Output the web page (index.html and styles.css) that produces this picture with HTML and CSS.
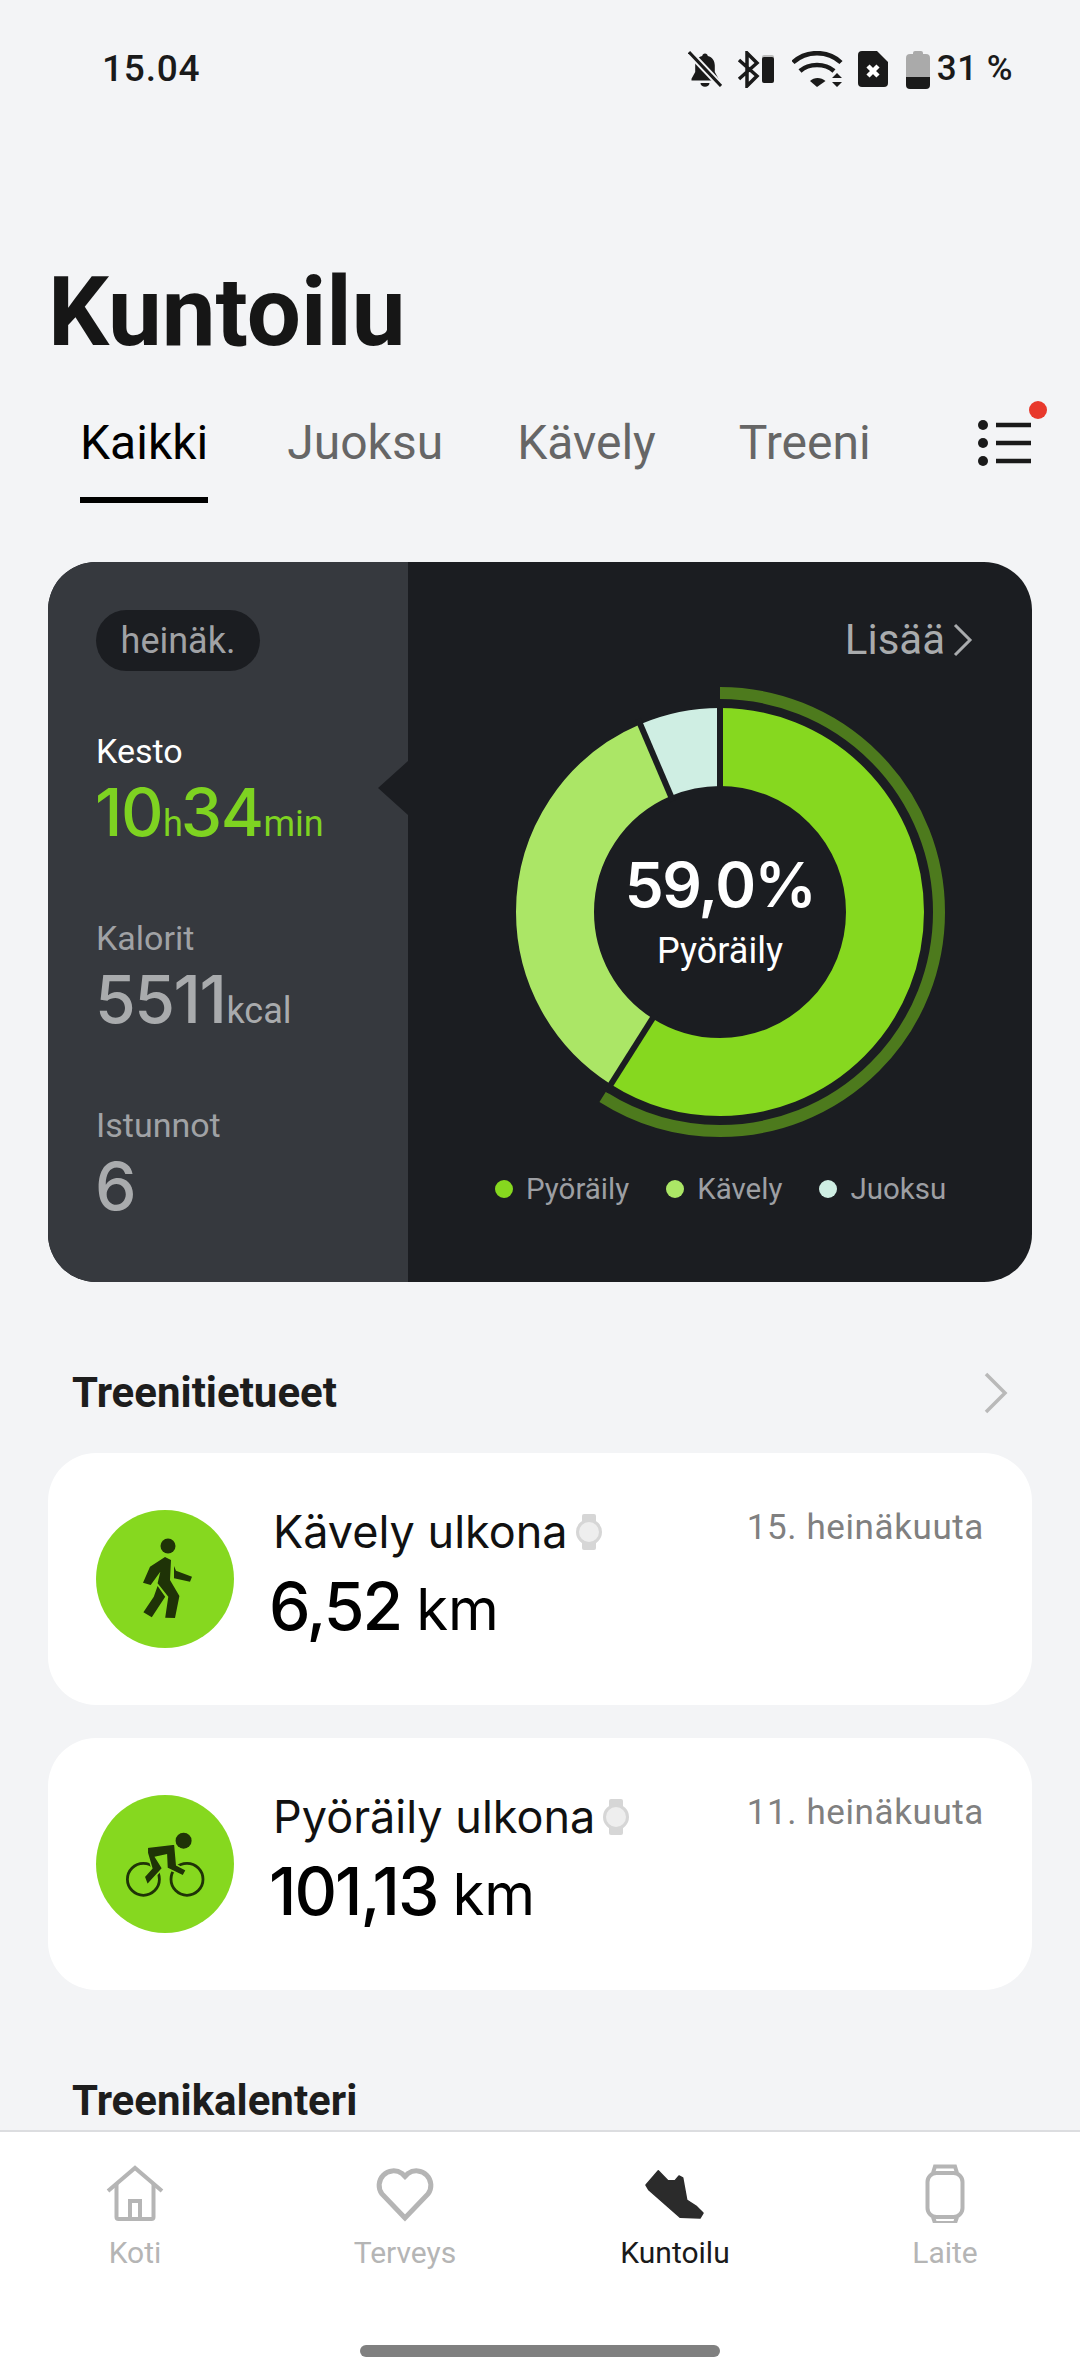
FILE: index.html
```html
<!DOCTYPE html>
<html lang="en">
<head>
  <meta charset="UTF-8">
  <title>Kuntoilu</title>
  <link rel="stylesheet" href="styles.css">
</head>
<body>
  <div class="status">
    <span class="clock">15.04</span>
    <div class="status-icons">
      <svg class="ic-bell" width="34" height="36" viewBox="0 0 34 36">
        <path d="M17 2.5c1.6 0 2.6 1 2.8 2.4 4.6 1.2 7 5 7 9.6v6.5l3.7 6.8v1.7H3.500v-1.700l3.700-6.800v-6.500c0-4.600 2.400-8.400 7-9.600.2-1.400 1.200-2.400 2.800-2.400z" fill="#1a1a1a"/>
        <path d="M12.500 32h9a4.500 3.800 0 0 1-9 0z" fill="#1a1a1a"/>
        <path d="M1 1l32 34" stroke="#f3f4f6" stroke-width="7"/>
        <path d="M1 1l32 34" stroke="#1a1a1a" stroke-width="3"/>
      </svg>
      <svg class="ic-bt" width="38" height="37" viewBox="0 0 38 37">
        <path d="M2 9l18 16-10 10V2l10 10L2 28" fill="none" stroke="#1a1a1a" stroke-width="3.500"/>
        <rect x="25" y="4" width="12" height="6" rx="2" fill="#bdbdbd"/>
        <rect x="25" y="6" width="12" height="26" rx="2" fill="#1a1a1a"/>
      </svg>
      <svg class="ic-wifi" width="52" height="36" viewBox="0 0 52 36">
        <path d="M2 11.500C15 -1 37 -1 50 11.500" transform="translate(-1 0)" fill="none" stroke="#1a1a1a" stroke-width="4.500"/>
        <path d="M9 20c9-8 25-8 34 0" transform="translate(-1 0)" fill="none" stroke="#1a1a1a" stroke-width="4.500"/>
        <path d="M18 30c4-4 11-4 15.500 0L25 36z" fill="#1a1a1a"/>
        <path d="M45 22l5 5H40zM40 31h10l-5 5z" fill="#1a1a1a"/>
      </svg>
      <svg class="ic-sim" width="30" height="36" viewBox="0 0 30 36">
        <path d="M4 0h15l11 11v21a4 4 0 0 1-4 4H4a4 4 0 0 1-4-4V4a4 4 0 0 1 4-4z" fill="#1a1a1a"/>
        <path d="M10 15l10 10M20 15L10 25" stroke="#fff" stroke-width="4.500"/>
      </svg>
      <svg class="ic-batt" width="24" height="39" viewBox="0 0 24 39">
        <path d="M7 3a2 2 0 0 1 2-2h6a2 2 0 0 1 2 2v1h3a4 4 0 0 1 4 4v19H0V8a4 4 0 0 1 4-4h3z" fill="#aaaaaa"/>
        <path d="M0 27h24v8a4 4 0 0 1-4 4H4a4 4 0 0 1-4-4z" fill="#1a1a1a"/>
      </svg>
      <span class="batt-text">31 %</span>
    </div>
  </div>

  <main class="content">
    <h1 class="title">Kuntoilu</h1>

    <div class="tabs">
      <span class="tab active">Kaikki</span>
      <span class="tab">Juoksu</span>
      <span class="tab">Kävely</span>
      <span class="tab">Treeni</span>
      <div class="tab-menu">
        <svg width="70" height="66" viewBox="0 0 70 66">
          <circle cx="6" cy="24" r="5" fill="#1a1a1a"/>
          <circle cx="6" cy="42" r="5" fill="#1a1a1a"/>
          <circle cx="6" cy="60" r="5" fill="#1a1a1a"/>
          <path d="M19 24h35M19 42h35M19 60h35" stroke="#1a1a1a" stroke-width="4.500"/>
          <circle cx="61" cy="9" r="9" fill="#e8392c"/>
        </svg>
      </div>
    </div>

    <section class="summary">
      <div class="summary-left">
        <span class="month">heinäk.</span>
        <div class="stat first">
          <div class="stat-label on">Kesto</div>
          <div class="stat-value on-green">10<small>h</small>34<small>min</small></div>
        </div>
        <div class="stat">
          <div class="stat-label">Kalorit</div>
          <div class="stat-value">5511<small>kcal</small></div>
        </div>
        <div class="stat">
          <div class="stat-label">Istunnot</div>
          <div class="stat-value">6</div>
        </div>
        <span class="notch"></span>
      </div>
      <div class="summary-right">
        <div class="more">
          <span>Lisää</span>
          <svg width="22" height="36" viewBox="0 0 22 36"><path d="M3 3l15 15L3 33" fill="none" stroke="#a9abad" stroke-width="3"/></svg>
        </div>
        <div class="donut">
          <svg width="450" height="450" viewBox="-225 -225 450 450">
            <g transform="rotate(-90)" fill="none">
              <circle r="219" stroke="#4d7a1d" stroke-width="12" pathLength="100" stroke-dasharray="59 41"/>
              <circle r="165" stroke="#86d81f" stroke-width="78" pathLength="100" stroke-dasharray="59 41"/>
              <circle r="165" stroke="#abe666" stroke-width="78" pathLength="100" stroke-dasharray="34.600 65.400" stroke-dashoffset="-59"/>
              <circle r="165" stroke="#cfeee3" stroke-width="78" pathLength="100" stroke-dasharray="6.400 93.600" stroke-dashoffset="-93.600"/>
            </g>
            <g stroke="#1b1d21" stroke-width="6">
              <path d="M0 -120V-210"/>
              <path d="M-64 101L-114 180"/>
              <path d="M-47 -111L-82 -193"/>
            </g>
          </svg>
          <div class="donut-center">
            <div class="donut-pct">59,0%</div>
            <div class="donut-name">Pyöräily</div>
          </div>
        </div>
        <div class="legend">
          <span class="legend-item"><i class="dot green"></i>Pyöräily</span>
          <span class="legend-item"><i class="dot light"></i>Kävely</span>
          <span class="legend-item"><i class="dot pale"></i>Juoksu</span>
        </div>
      </div>
    </section>

    <div class="section-head">
      <h2>Treenitietueet</h2>
      <svg width="28" height="44" viewBox="0 0 28 44"><path d="M4 3l19 19L4 41" fill="none" stroke="#b9b9b9" stroke-width="3.500"/></svg>
    </div>

    <article class="record">
      <div class="record-icon">
        <svg width="138" height="138" viewBox="0 0 138 138" fill="#1f3307">
          <circle cx="72" cy="36" r="7.500"/>
          <path d="M69 47l6 3-1 20 9.400 16L79 108l-9.800-.300 3.100-21-10.700-13.400 2.700-11.600L54.700 75 47 72.700 54 56.700z"/>
          <path d="M61.600 76l7.600 10.700-13.400 20.600-8.400-5 10.400-15.600z"/>
          <path d="M78 56l2 4.700 16 6-2 5-16-3.400z"/>
        </svg>
      </div>
      <div class="record-body">
        <div class="record-name">Kävely ulkona<svg class="watch" width="26" height="36" viewBox="0 0 26 36"><rect x="6" y="0" width="14" height="36" rx="2" fill="#d6d6d6"/><circle cx="13" cy="18" r="11.500" fill="#eeeeee" stroke="#d6d6d6" stroke-width="3"/></svg></div>
        <div class="record-value">6,52<small>km</small></div>
      </div>
      <span class="record-date">15. heinäkuuta</span>
    </article>

    <article class="record">
      <div class="record-icon">
        <svg width="138" height="138" viewBox="0 0 138 138">
          <circle cx="47.400" cy="84.300" r="16" fill="none" stroke="#1f3307" stroke-width="2.800"/>
          <circle cx="91" cy="84.300" r="16" fill="none" stroke="#1f3307" stroke-width="2.800"/>
          <g fill="#1f3307">
            <circle cx="87.600" cy="45.700" r="8"/>
            <path d="M51.300 52.300L78.800 49l1.900 21 9.600 5-3.300 6-16-7.700-.6-13.300-10.700 2.300 6.900 11L51.300 90l-3.100-8.300 7.600-8.400L51.300 58z" stroke="#86d81f" stroke-width="1.500"/>
          </g>
        </svg>
      </div>
      <div class="record-body">
        <div class="record-name">Pyöräily ulkona<svg class="watch" width="26" height="36" viewBox="0 0 26 36"><rect x="6" y="0" width="14" height="36" rx="2" fill="#d6d6d6"/><circle cx="13" cy="18" r="11.500" fill="#eeeeee" stroke="#d6d6d6" stroke-width="3"/></svg></div>
        <div class="record-value">101,13<small>km</small></div>
      </div>
      <span class="record-date">11. heinäkuuta</span>
    </article>

    <div class="section-head cal">
      <h2>Treenikalenteri</h2>
    </div>
  </main>

  <nav class="bottom-nav">
    <div class="nav-item">
      <svg width="60" height="60" viewBox="0 0 60 60" fill="none" stroke="#b5b5b5" stroke-width="4">
        <path d="M3 28L30 5l27 23"/>
        <path d="M11.500 21v33a2 2 0 0 0 2 2h33a2 2 0 0 0 2-2V21"/>
        <path d="M25 55V38h10v17"/>
      </svg>
      <span>Koti</span>
    </div>
    <div class="nav-item">
      <svg width="60" height="60" viewBox="0 0 60 60" fill="none" stroke="#b5b5b5" stroke-width="5">
        <path d="M30 55L7 31A14.500 14.500 0 0 1 27 10.500L30 13.500l3-3A14.500 14.500 0 0 1 53 31z"/>
      </svg>
      <span>Terveys</span>
    </div>
    <div class="nav-item active">
      <svg width="60" height="60" viewBox="0 0 60 60" fill="#2b2b2b">
        <path d="M13.300 7.700L1 22l3 5 31 27.300 20 .7 3-5-6.300-6.300L41.700 37l-4-22-3.700-2-4 4.700H23z" stroke="#2b2b2b" stroke-width="1.500" stroke-linejoin="round"/>
      </svg>
      <span>Kuntoilu</span>
    </div>
    <div class="nav-item">
      <svg width="60" height="60" viewBox="0 0 60 60" fill="none" stroke="#b5b5b5" stroke-width="4">
        <rect x="12.500" y="10" width="35" height="44" rx="9"/>
        <path d="M18 10l2-6.500h20L42 10M18 54l2 6h20l2-6"/>
      </svg>
      <span>Laite</span>
    </div>
    <div class="home-bar"></div>
  </nav>
</body>
</html>
```

FILE: styles.css
```css
* { box-sizing: border-box; }
html, body { margin: 0; padding: 0; }
body { width: 1080px; height: 2378px; overflow: hidden; background: #f3f4f6; font-family: Roboto, "Noto Sans", sans-serif; color: #1a1a1a; display: flex; flex-direction: column; }

.status { height: 136px; flex: none; display: flex; justify-content: space-between; padding: 47px 67px 0 102px; align-items: flex-start; }
.clock { font-size: 37px; font-weight: 500; line-height: 44px; letter-spacing: .8px; }
.status-icons { display: flex; align-items: center; height: 44px; }
.ic-bt { margin-left: 15px; }
.ic-wifi { margin-left: 17px; }
.ic-sim { margin-left: 14px; }
.ic-batt { margin-left: 18px; }
.batt-text { font-size: 35px; font-weight: 500; margin-left: 7px; line-height: 44px; white-space: nowrap; letter-spacing: .5px; }

.content { flex: 1; overflow: hidden; }
.title { margin: 126px 0 0 48px; font-size: 96px; line-height: 100px; font-weight: 700; color: #161616; }

.tabs { display: flex; align-items: flex-start; margin-top: 49px; padding-left: 80px; height: 101px; }
.tab { font-size: 48px; line-height: 64px; color: #666666; margin-right: 79px; white-space: nowrap; }
.tab:nth-child(2) { margin-right: 74px; }
.tab:nth-child(3) { margin-right: 83px; }
.tab.active { color: #000; border-bottom: 6px solid #000; height: 92px; }
.tab-menu { margin-left: auto; margin-right: 33px; margin-top: -10px; }
.tab-menu svg { display: block; }

.summary { margin: 50px 48px 0; height: 720px; border-radius: 48px; overflow: hidden; display: flex; background: #1b1d21; }
.summary-left { width: 360px; flex: none; background: #36393e; padding: 48px 0 0 48px; position: relative; }
.month { display: inline-block; width: 164px; height: 61px; border-radius: 31px; background: #1b1d21; color: #a0a2a5; font-size: 36px; line-height: 63px; text-align: center; }
.stat { height: 187px; }
.stat.first { margin-top: 60px; }
.stat-label { font-size: 34px; line-height: 40px; color: #a0a2a5; }
.stat-label.on { color: #fff; }
.stat-value { font-family: Inter, Roboto, sans-serif; font-size: 66px; line-height: 76px; font-weight: 500; color: #a9abad; margin-top: 3px; letter-spacing: -1.500px; white-space: nowrap; margin-left: -1px; }
.stat-value small { font-family: Roboto, sans-serif; font-size: 36px; font-weight: 400; letter-spacing: 0; margin: 0 -2px 0 1px; }
.stat-value.on-green { color: #7ed321; }
.notch { position: absolute; right: 0; top: 199px; width: 0; height: 0; border-top: 27px solid transparent; border-bottom: 27px solid transparent; border-right: 30px solid #1b1d21; }

.summary-right { flex: 1; display: flex; flex-direction: column; align-items: center; position: relative; padding-top: 58px; }
.more { align-self: flex-end; margin-right: 58px; display: flex; align-items: center; gap: 7px; font-size: 42px; line-height: 40px; color: #a9abad; }
.donut { position: relative; width: 450px; height: 450px; margin-top: 27px; }
.donut svg { display: block; }
.donut-center { position: absolute; left: 0; right: 0; top: 160px; text-align: center; color: #fff; }
.donut-pct { font-family: Inter, Roboto, sans-serif; font-size: 62px; line-height: 76px; font-weight: 600; letter-spacing: -1.500px; }
.donut-name { font-size: 36px; line-height: 44px; margin-top: 6px; }
.legend { display: flex; margin-top: 32px; align-self: flex-start; padding-left: 87px; }
.legend-item { font-size: 29.500px; line-height: 40px; color: #9d9fa3; display: flex; align-items: center; margin-right: 37px; white-space: nowrap; }
.dot { width: 18px; height: 18px; border-radius: 50%; margin-right: 13px; display: block; }
.dot.green { background: #86d81f; }
.dot.light { background: #abe666; }
.dot.pale { background: #cfeee3; }

.section-head { display: flex; justify-content: space-between; align-items: center; margin: 84px 48px 0 72px; padding-right: 22px; height: 54px; }
.section-head h2 { margin: 0; font-size: 42px; line-height: 54px; font-weight: 700; color: #1d1d1d; }
.section-head.cal { margin-top: 84px; }

.record { margin: 33px 48px 0; height: 252px; background: #fff; border-radius: 48px; display: flex; padding: 57px 49px 0 48px; position: relative; }
.record-icon { width: 138px; height: 138px; border-radius: 50%; background: #86d81f; flex: none; }
.record-icon svg { display: block; }
.record-body { margin-left: 40px; margin-top: -6px; flex: 1; }
.record-name { font-family: Inter, Roboto, sans-serif; font-size: 45px; line-height: 56px; color: #111; display: flex; align-items: center; margin-left: -1px; white-space: nowrap; }
.watch { margin-left: 8px; }
.record-value { font-family: Inter, Roboto, sans-serif; font-size: 66px; line-height: 76px; font-weight: 500; color: #000; margin-top: 8px; margin-left: -5px; white-space: nowrap; letter-spacing: -2px; }
.record-value small { font-family: Inter, Roboto, sans-serif; font-size: 58px; font-weight: 400; margin-left: 15px; letter-spacing: 0; }
.record-date { position: absolute; top: 55px; right: 48px; font-size: 35px; line-height: 40px; color: #808080; letter-spacing: .6px; }

.bottom-nav { flex: none; height: 248px; background: #fff; border-top: 2px solid #dcdde0; display: grid; grid-template-columns: repeat(4, 270px); padding-top: 31px; position: relative; align-content: start; }
.nav-item { display: flex; flex-direction: column; align-items: center; color: #b5b5b5; font-size: 30px; }
.nav-item svg { display: block; }
.nav-item span { line-height: 36px; margin-top: 12px; }
.nav-item.active { color: #1a1a1a; }
.home-bar { position: absolute; left: 360px; bottom: 21px; width: 360px; height: 12px; border-radius: 6px; background: #808080; }
```
